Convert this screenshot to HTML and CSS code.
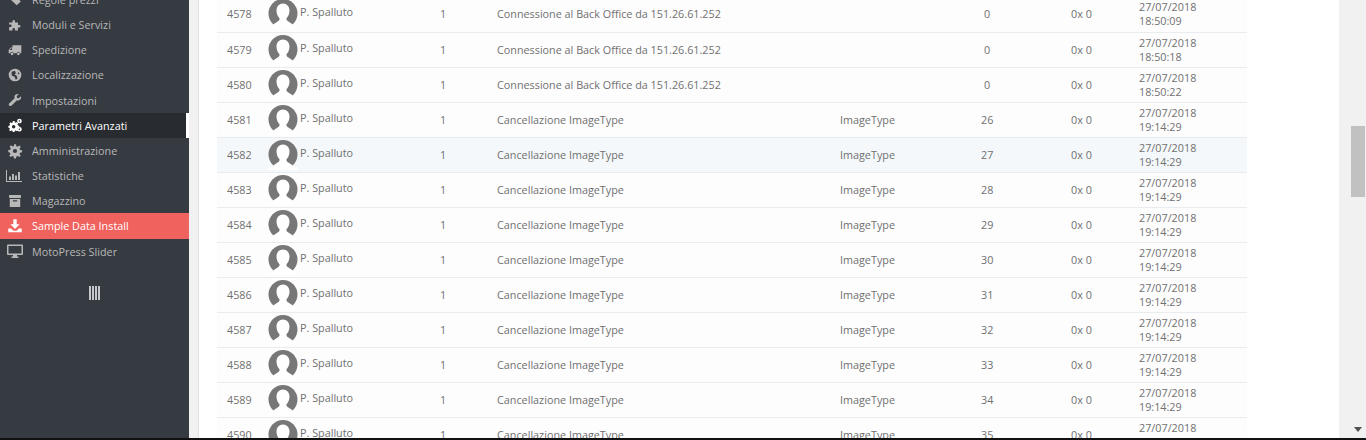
FILE: index.html
```html
<!DOCTYPE html>
<html lang="it">
<head>
  <meta charset="UTF-8" />
  <meta name="viewport" content="width=device-width, initial-scale=1.0"/>
  <title>Log - Parametri Avanzati</title>
  <link rel="stylesheet" href="styles.css">
</head>
<body>
  <svg class="defs" width="0" height="0">
    <symbol id="avatar" viewBox="0 0 30 30">
      <circle cx="15" cy="14.500" r="14.500" fill="#777"/>
      <path d="M15 4.500c-3.800 0-6.500 3-6.500 7 0 3.300 1.300 6 3 7.700.2 1.300-.3 2.300-1.500 3l-4.500 3L7 30h16l1.500-4.800-4.500-3c-1.200-.7-1.700-1.700-1.500-3 1.700-1.700 3-4.400 3-7.700 0-4-2.700-7-6.500-7z" fill="#fff"/>
      <path d="M0 27.500h30V30H0z" fill="#fff"/>
    </symbol>
  </svg>

  <div class="app">
    <!-- MENU LATERALE -->
    <nav class="sidebar">
      <a class="nav-item"><svg class="nav-icon" viewBox="-1.500 -1.500 19 19"><path d="M1 3h6l8 8-5 4.500-9-8.500z" fill="currentColor"/></svg>Regole prezzi</a>
      <a class="nav-item"><svg class="nav-icon" viewBox="-1.500 -1.500 19 19"><path d="M1 5h4V3.500a1.500 1.500 0 0 1 3 0V5h3.500v3h1.500a1.500 1.500 0 0 1 0 3h-1.500v3.500H8v-1.500a1.500 1.500 0 0 0-3 0v1.500H1v-4h1.500a1.500 1.500 0 0 0 0-3H1z" fill="currentColor"/></svg>Moduli e Servizi</a>
      <a class="nav-item"><svg class="nav-icon" viewBox="-1.500 -1.500 19 19"><path d="M5 2.500h10.500v9.500H14a2 2 0 0 0-4 0H6.500a2 2 0 0 0-4 0H.5V8l2.500-3h2zM1.800 8h2.700V6H3.300z" fill="currentColor" fill-rule="evenodd"/><circle cx="4.500" cy="12.500" r="1.600" fill="currentColor"/><circle cx="12" cy="12.500" r="1.600" fill="currentColor"/></svg>Spedizione</a>
      <a class="nav-item"><svg class="nav-icon" viewBox="-1.500 -1.500 19 19"><circle cx="8" cy="8" r="7.500" fill="currentColor"/><path d="M4 4l4-1 1 3-1.500 1.500L10 9l1 3-2 2-1.500-4L4 8.500zM11.500 4l2 2.500-2 1z" fill="#363a41"/></svg>Localizzazione</a>
      <a class="nav-item"><svg class="nav-icon" viewBox="-1.500 -1.500 19 19"><path d="M.8 12.500l6.700-6.500c-.5-2 0-3.500 1.300-4.500 1-.8 2.500-1 3.700-.5L10 3.500l.5 2 2 .5L15 3.500c.5 1.500.2 3-.8 4-1.200 1.200-2.800 1.500-4.200 1l-6 6c-.8.800-1.700 1-2.600.4s-1-1.400-.6-2.400z" fill="currentColor"/></svg>Impostazioni</a>
      <a class="nav-item active"><svg class="nav-icon" viewBox="-1 -1 18 18"><path d="M5.500 3.500h2l.3 1.500 1.100.5 1.300-.8 1.400 1.400-.8 1.300.5 1.100 1.500.3v2l-1.500.3-.5 1.100.8 1.300-1.400 1.400-1.300-.8-1.100.5-.3 1.400h-2l-.3-1.400-1.100-.5-1.300.8-1.400-1.400.8-1.300-.5-1.100L.5 11V9l1.500-.3.500-1.100-.8-1.300 1.400-1.400 1.300.8 1.100-.5zM6.500 8a2 2 0 1 0 0 4 2 2 0 0 0 0-4z" fill="currentColor" fill-rule="evenodd"/><circle cx="13" cy="3.500" r="1.700" fill="none" stroke="currentColor" stroke-width="1.800"/><circle cx="13" cy="12.800" r="1.700" fill="none" stroke="currentColor" stroke-width="1.800"/></svg>Parametri Avanzati</a>
      <a class="nav-item"><svg class="nav-icon" viewBox="-1.500 -1.500 19 19"><path d="M6.800 0h2.400l.4 2.400 1.500.6 2-1.400 1.700 1.700-1.400 2 .6 1.500 2.400.4v2.400l-2.400.4-.6 1.500 1.400 2-1.700 1.700-2-1.400-1.500.6-.4 2.400H6.800l-.4-2.400-1.500-.6-2 1.400-1.700-1.700 1.400-2-.6-1.500L0 9.200V6.800l2.400-.4.600-1.500-1.400-2 1.700-1.700 2 1.400 1.500-.6zM8 5.500a2.500 2.500 0 1 0 0 5 2.500 2.500 0 0 0 0-5z" fill="currentColor" fill-rule="evenodd"/></svg>Amministrazione</a>
      <a class="nav-item"><svg class="nav-icon" viewBox="1 0 16 16"><path d="M0 2h1v11h15v1H0zM3 8.500h2V12H3zM6 6h2v6H6zM9 7.500h2V12H9zM12 4h2v8h-2z" fill="currentColor"/></svg>Statistiche</a>
      <a class="nav-item"><svg class="nav-icon" viewBox="-1.500 -1.500 19 19"><path d="M1 1h14v3.500H1zM1.800 5.500h12.400V15H1.800zM5.500 7v1.500h5V7z" fill="currentColor" fill-rule="evenodd"/></svg>Magazzino</a>
      <a class="nav-item install"><svg class="nav-icon" viewBox="-1.500 -1.500 19 19"><path d="M6 0h4v6h3.500L8 11.500 2.500 6H6zM0 11h3.500l2.500 2.500h4L12.500 11H16v4.500H0z" fill="currentColor"/></svg>Sample Data Install</a>
      <a class="nav-item"><svg class="nav-icon" viewBox="0 0 16 16"><path d="M1 1.500h14a1 1 0 0 1 1 1V11a1 1 0 0 1-1 1H10v1.500h1.500V15h-7v-1.500H6V12H1a1 1 0 0 1-1-1V2.500a1 1 0 0 1 1-1zM1.500 3v7.500h13V3z" fill="currentColor" fill-rule="evenodd"/></svg>MotoPress Slider</a>
      <div class="collapse-btn"><span></span><span></span><span></span><span></span></div>
    </nav>

    <div class="content">
      <main class="panel">
        <table class="log-table">
          <tr><td class="c-id">4578</td><td><div class="c-emp"><svg class="avatar"><use href="#avatar"/></svg><span>P. Spalluto</span></div></td><td class="c-sev">1</td><td>Connessione al Back Office da 151.26.61.252</td><td></td><td>0</td><td>0x 0</td><td>27/07/2018<br>18:50:09</td></tr>
          <tr><td class="c-id">4579</td><td><div class="c-emp"><svg class="avatar"><use href="#avatar"/></svg><span>P. Spalluto</span></div></td><td class="c-sev">1</td><td>Connessione al Back Office da 151.26.61.252</td><td></td><td>0</td><td>0x 0</td><td>27/07/2018<br>18:50:18</td></tr>
          <tr><td class="c-id">4580</td><td><div class="c-emp"><svg class="avatar"><use href="#avatar"/></svg><span>P. Spalluto</span></div></td><td class="c-sev">1</td><td>Connessione al Back Office da 151.26.61.252</td><td></td><td>0</td><td>0x 0</td><td>27/07/2018<br>18:50:22</td></tr>
          <tr><td class="c-id">4581</td><td><div class="c-emp"><svg class="avatar"><use href="#avatar"/></svg><span>P. Spalluto</span></div></td><td class="c-sev">1</td><td>Cancellazione ImageType</td><td>ImageType</td><td>26</td><td>0x 0</td><td>27/07/2018<br>19:14:29</td></tr>
          <tr class="hover"><td class="c-id">4582</td><td><div class="c-emp"><svg class="avatar"><use href="#avatar"/></svg><span>P. Spalluto</span></div></td><td class="c-sev">1</td><td>Cancellazione ImageType</td><td>ImageType</td><td>27</td><td>0x 0</td><td>27/07/2018<br>19:14:29</td></tr>
          <tr><td class="c-id">4583</td><td><div class="c-emp"><svg class="avatar"><use href="#avatar"/></svg><span>P. Spalluto</span></div></td><td class="c-sev">1</td><td>Cancellazione ImageType</td><td>ImageType</td><td>28</td><td>0x 0</td><td>27/07/2018<br>19:14:29</td></tr>
          <tr><td class="c-id">4584</td><td><div class="c-emp"><svg class="avatar"><use href="#avatar"/></svg><span>P. Spalluto</span></div></td><td class="c-sev">1</td><td>Cancellazione ImageType</td><td>ImageType</td><td>29</td><td>0x 0</td><td>27/07/2018<br>19:14:29</td></tr>
          <tr><td class="c-id">4585</td><td><div class="c-emp"><svg class="avatar"><use href="#avatar"/></svg><span>P. Spalluto</span></div></td><td class="c-sev">1</td><td>Cancellazione ImageType</td><td>ImageType</td><td>30</td><td>0x 0</td><td>27/07/2018<br>19:14:29</td></tr>
          <tr><td class="c-id">4586</td><td><div class="c-emp"><svg class="avatar"><use href="#avatar"/></svg><span>P. Spalluto</span></div></td><td class="c-sev">1</td><td>Cancellazione ImageType</td><td>ImageType</td><td>31</td><td>0x 0</td><td>27/07/2018<br>19:14:29</td></tr>
          <tr><td class="c-id">4587</td><td><div class="c-emp"><svg class="avatar"><use href="#avatar"/></svg><span>P. Spalluto</span></div></td><td class="c-sev">1</td><td>Cancellazione ImageType</td><td>ImageType</td><td>32</td><td>0x 0</td><td>27/07/2018<br>19:14:29</td></tr>
          <tr><td class="c-id">4588</td><td><div class="c-emp"><svg class="avatar"><use href="#avatar"/></svg><span>P. Spalluto</span></div></td><td class="c-sev">1</td><td>Cancellazione ImageType</td><td>ImageType</td><td>33</td><td>0x 0</td><td>27/07/2018<br>19:14:29</td></tr>
          <tr><td class="c-id">4589</td><td><div class="c-emp"><svg class="avatar"><use href="#avatar"/></svg><span>P. Spalluto</span></div></td><td class="c-sev">1</td><td>Cancellazione ImageType</td><td>ImageType</td><td>34</td><td>0x 0</td><td>27/07/2018<br>19:14:29</td></tr>
          <tr><td class="c-id">4590</td><td><div class="c-emp"><svg class="avatar"><use href="#avatar"/></svg><span>P. Spalluto</span></div></td><td class="c-sev">1</td><td>Cancellazione ImageType</td><td>ImageType</td><td>35</td><td>0x 0</td><td>27/07/2018<br>19:14:29</td></tr>
        </table>
      </main>
      <div class="scrollbar">
        <div class="scroll-thumb"></div>
        <div class="scroll-down"></div>
      </div>
    </div>
  </div>
  <div class="bottom-line"></div>
</body>
</html>
```

FILE: styles.css
```css
html, body {
  margin: 0;
  padding: 0;
  height: 440px;
  overflow: hidden;
}
body {
  font-family: "Open Sans", sans-serif;
  font-size: 10.800px;
  color: #707070;
  background: #f1f1f1;
}
.defs {
  display: block;
  height: 0;
}
.app {
  display: flex;
  height: 438px;
  overflow: hidden;
}
.bottom-line {
  height: 2px;
  background: #111;
}

/* menu laterale */
.sidebar {
  width: 189px;
  flex: none;
  background: #363a41;
  margin-top: -13.200px;
  color: #b8b8b8;
}
.nav-item {
  display: flex;
  align-items: center;
  height: 25.200px;
  box-sizing: border-box;
  padding-left: 6.500px;
}
.nav-icon {
  width: 16px;
  height: 16px;
  margin-right: 9.500px;
  flex: none;
  overflow: visible;
}
.nav-item.active {
  background: #282b30;
  color: #fff;
  border-right: 3px solid #fff;
}
.nav-item.install {
  background: #f0625e;
  color: #fff;
  height: 25.800px;
  margin: -0.600px 0 0;
}
.collapse-btn {
  display: flex;
  justify-content: center;
  gap: 1px;
  margin-top: 22px;
}
.collapse-btn span {
  width: 2px;
  height: 14px;
  background: #c4c8cc;
}

/* contenuto */
.content {
  flex: 1;
  display: flex;
  padding-left: 9px;
}
.panel {
  width: 1141px;
  flex: none;
  box-sizing: border-box;
  background: #fff;
  border-left: 1px solid #e2e2e2;
  padding-left: 18px;
  margin-right: 11px;
}
.log-table {
  width: 1030px;
  border-collapse: collapse;
  table-layout: fixed;
  margin-top: -3px;
}
.log-table tr {
  height: 35px;
  background: #fdfdfe;
}
.log-table tr.hover {
  background: #f4f8fb;
}
.log-table td {
  padding: 0;
  border-bottom: 1px solid #eaedef;
  white-space: nowrap;
  vertical-align: middle;
  line-height: 14px;
}
.log-table td:nth-child(1) { width: 51px; padding-left: 10px; box-sizing: border-box; }
.log-table td:nth-child(2) { width: 170px; }
.log-table td:nth-child(3) { width: 59px; padding-left: 2px; box-sizing: border-box; }
.log-table td:nth-child(4) { width: 343px; }
.log-table td:nth-child(5) { width: 141px; }
.log-table td:nth-child(6) { width: 90px; padding-right: 78px; box-sizing: border-box; text-align: center; }
.log-table td:nth-child(7) { width: 68px; }
.c-emp {
  display: flex;
  align-items: center;
}
.c-emp span {
  margin: -4px 0 0 2px;
}
.avatar {
  width: 30px;
  height: 30px;
  flex: none;
}

/* barra di scorrimento */
.scrollbar {
  width: 16px;
  flex: none;
  position: relative;
}
.scroll-thumb {
  width: 14px;
  height: 71px;
  margin: 126px 0 0 1px;
  background: #c1c1c1;
}
.scroll-down {
  position: absolute;
  left: 4px;
  top: 427px;
  border: 4px solid transparent;
  border-top: 5px solid #505050;
  border-bottom: 0;
}
```
